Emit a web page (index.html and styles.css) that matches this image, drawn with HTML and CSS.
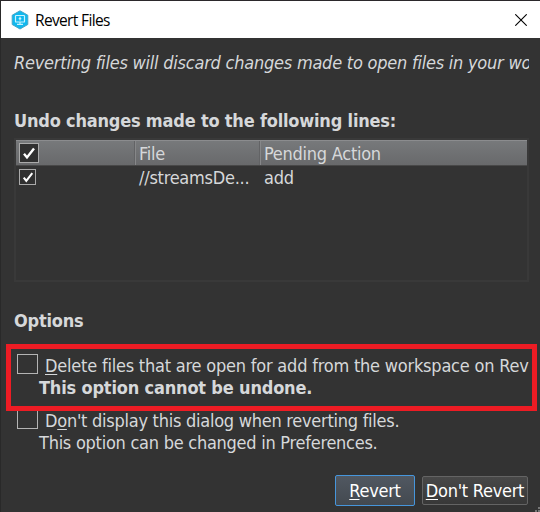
FILE: index.html
```html
<!DOCTYPE html>
<html lang="en">
<head>
<meta charset="utf-8">
<title>Revert Files</title>
<link rel="stylesheet" href="styles.css">
</head>
<body>
<div class="dialog">
  <header class="titlebar">
    <svg class="logo" width="18" height="20" viewBox="0 0 18 20">
      <path d="M9 .8 16.8 5.2v9.3L9 19 1.2 14.500V5.200z" fill="#10b8ee" stroke="#45a5c8" stroke-width="1" stroke-linejoin="round"/>
      <rect x="4.500" y="5.500" width="9" height="6.500" rx=".6" fill="none" stroke="#c9f2ff" stroke-width="1.200"/>
      <path d="M9 6.800v3.800M7.700 8.700h2.600M9 12v2M6 14.400h6" fill="none" stroke="#c9f2ff" stroke-width="1.200"/>
    </svg>
    <span class="title">Revert Files</span>
    <svg class="close" width="12" height="12" viewBox="0 0 12 12"><path d="M.3.3 11.700 11.700M11.700.3.3 11.700" stroke="#000" stroke-width="1.100"/></svg>
  </header>
  <main class="body">
    <p class="intro">Reverting files will discard changes made to open files in your wo</p>
    <h2 class="heading lines">Undo changes made to the following lines:</h2>
    <div class="table">
      <div class="row head">
        <div class="cell check"><span class="box big"><svg width="14" height="14" viewBox="0 0 14 14"><path d="m2 7.800 3 3.600L12 2.500"/></svg></span></div>
        <div class="cell file">File</div>
        <div class="cell action">Pending Action</div>
      </div>
      <div class="row">
        <div class="cell check"><span class="box small"><svg width="12" height="12" viewBox="0 0 14 14"><path d="m2 7.800 3 3.600L12 2.500"/></svg></span></div>
        <div class="cell file">//streamsDe...</div>
        <div class="cell action">add</div>
      </div>
    </div>
    <h2 class="heading options">Options</h2>
    <section class="option marked">
      <div class="label"><span class="box empty"></span><span class="text delete"><u>D</u>elete files that are open for add from the workspace on Rev</span></div>
      <p class="note strong">This option cannot be undone.</p>
    </section>
    <section class="option plain">
      <div class="label"><span class="box empty cut"></span><span class="text">D<u>o</u>n't display this dialog when reverting files.</span></div>
      <p class="note">This option can be changed in Preferences.</p>
    </section>
    <footer class="actions">
      <button class="btn primary"><u>R</u>evert</button>
      <button class="btn"><u>D</u>on't Revert</button>
    </footer>
  </main>
  <svg class="grip" width="5" height="5" viewBox="0 0 5 5"><path d="M3 0h2v2H3zM0 3h2v2H0zM3 3h2v2H3z" fill="#777"/></svg>
</div>
</body>
</html>
```
FILE: styles.css
```css
* { box-sizing: border-box; }
body { margin: 0; background: #333; }
.dialog {
  position: relative;
  width: 540px; height: 512px; overflow: hidden;
  background: #333; color: #d6d8da;
  border-top: 1px solid #2b282b; border-left: 1px solid #292929;
  font: 18px/22px "DejaVu Sans Condensed", "DejaVu Sans", sans-serif;
  font-stretch: condensed;
  letter-spacing: -0.26px;
  white-space: nowrap;
}
.titlebar { display: flex; align-items: center; height: 37px; padding: 0 13px 0 10px; background: #fff; color: #000; }
.title { margin-left: 6px; font: 15.5px/22px "Open Sans", sans-serif; letter-spacing: -0.65px; }
.close { margin-left: auto; }
.body { padding: 0 12px 0 13px; }
p, h2 { margin: 0; font-size: 18px; line-height: 22px; }
.intro { height: 24px; margin: 14px -1px 0 0; overflow: hidden; font-style: italic; letter-spacing: -0.23px; }
.heading { font-weight: bold; letter-spacing: -0.2px; }
.lines { margin-top: 34px; }
.table { height: 144px; margin: 6px -1px 0 0; border: 2px solid #393939; }
.row { display: grid; grid-template-columns: 119px 125px 1fr; height: 24px; }
.head { height: 26px; grid-template-rows: 24px; background: linear-gradient(#77797b, #68696b); border-top: 1px solid #8b8c8e; border-bottom: 1px solid #484848; }
.cell { padding-left: 4px; line-height: 24px; }
.check { padding-left: 3px; }
.head .cell + .cell { line-height: 26px; padding-left: 3px; border-left: 1px solid #868789; box-shadow: -1px 0 #626365; }
.box { display: block; flex: none; border: 1px solid #aaa; background: #303030; }
.box svg { display: block; fill: none; stroke: #fff; stroke-width: 2.400; }
.big { width: 20px; height: 20px; margin-top: 2px; padding: 2px; }
.small { width: 17px; height: 16px; margin-top: 3px; padding: 1px 2px; }
.empty { width: 21px; height: 20px; border-color: #b4b4b4; background: #333; }
.options { margin-top: 28px; }
.option { height: 67px; }
.marked { margin: 12px -9px 0 -8px; border: 5px solid #ed1c24; padding: 5px 2px 0 6px; }
.label { display: flex; height: 23px; }
.text { margin-left: 7px; }
.delete { padding-top: 1px; letter-spacing: -0.21px; }
.note { margin-left: 22px; }
.strong { font-weight: bold; letter-spacing: -0.18px; }
.plain { height: 50px; padding: 0 0 0 3px; }
.plain .label { height: 22px; }
.plain .text, .plain .note { margin-top: -1px; }
.cut { height: 18px; border-top: 0; }
.actions { display: flex; justify-content: flex-end; gap: 7px; margin-top: 14px; align-items: center; }
.btn {
  width: 106px; height: 29px; padding: 0; color: #fff; font: inherit; letter-spacing: -0.26px; white-space: nowrap;
  border: 1px solid #646464; border-radius: 2px; background: linear-gradient(#484848, #383838);
}
.primary { width: 80px; height: 31px; border-color: #4696dc; background: linear-gradient(#515861, #434950); }
.grip { position: absolute; right: 0; bottom: 0; }
u { text-underline-offset: 2px; text-decoration-thickness: 1px; text-decoration-skip-ink: none; }
```
